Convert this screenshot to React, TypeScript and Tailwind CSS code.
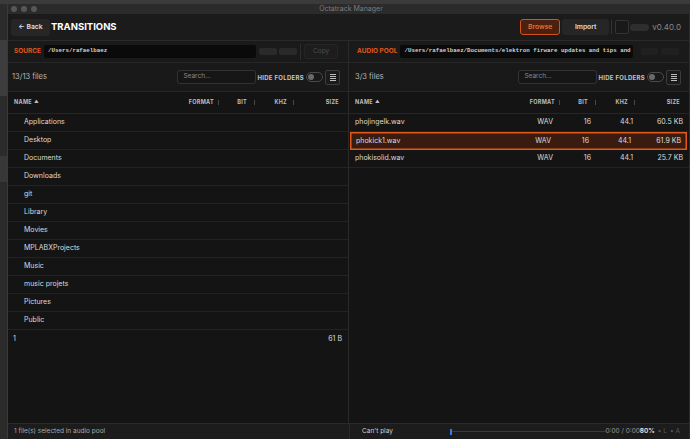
const leftFiles = [
  'Applications',
  'Desktop',
  'Documents',
  'Downloads',
  'git',
  'Library',
  'Movies',
  'MPLABXProjects',
  'Music',
  'music projets',
  'Pictures',
  'Public',
];

const poolFiles = [
  { name: 'phojingelk.wav', format: 'WAV', bit: '16', khz: '44.1', size: '60.5 KB' },
  { name: 'phokick1.wav', format: 'WAV', bit: '16', khz: '44.1', size: '61.9 KB', selected: true },
  { name: 'phokisolid.wav', format: 'WAV', bit: '16', khz: '44.1', size: '25.7 KB' },
];

const cols = 'grid grid-cols-[1fr_62px_36px_40px_48px] pl-[6px] pr-[5px]';

function MenuButton() {
  return (
    <div className="ml-[2px] flex h-[15px] w-[15px] flex-col items-center justify-center gap-[1px] rounded-[2px] border border-[#3c3c3c] bg-[#1b1b1b]">
      <span className="h-px w-[6px] bg-[#bbb]" />
      <span className="h-px w-[6px] bg-[#bbb]" />
      <span className="h-px w-[6px] bg-[#bbb]" />
      <span className="h-px w-[6px] bg-[#bbb]" />
    </div>
  );
}

function Toolbar({ count, indent }: { count: string; indent: string }) {
  return (
    <div className={`flex h-[29px] shrink-0 items-center border-b border-[#262626] bg-[#191919] pr-[8px] ${indent}`}>
      <span className="text-[7.5px] text-[#b3b3b3]">{count}</span>
      <div className="ml-auto flex h-[14px] w-[79px] items-center rounded-[3px] border border-[#333] bg-[#161616] pl-[5px] text-[6.5px] text-[#8a8a8a]">
        Search...
      </div>
      <span className="ml-[1px] text-[6px] font-bold tracking-[0.3px] text-[#c4c4c4]">HIDE FOLDERS</span>
      <div className="ml-[2px] flex h-[10px] w-[17px] items-center rounded-full border border-[#4a4a4a] pl-[1px]">
        <span className="h-[6px] w-[6px] rounded-full bg-[#6a6a6a]" />
      </div>
      <MenuButton />
    </div>
  );
}

function ColumnHeader() {
  return (
    <div className={`${cols} h-[22px] shrink-0 items-center border-b border-[#262626] text-[5.5px] font-bold tracking-[0.3px] text-[#bdbdbd]`}>
      <div className="flex items-center gap-[2px]">
        NAME <span className="text-[4.5px]">▲</span>
      </div>
      <div className="flex items-center justify-end gap-[4px]">
        FORMAT<span className="h-[5px] w-px bg-[#4a4a4a]" />
      </div>
      <div className="flex items-center justify-end gap-[7px]">
        BIT<span className="h-[5px] w-px bg-[#4a4a4a]" />
      </div>
      <div className="flex items-center justify-end gap-[6px] pr-[1px]">
        KHZ<span className="h-[5px] w-px bg-[#4a4a4a]" />
      </div>
      <div className="pr-[4px] text-right">SIZE</div>
    </div>
  );
}

function SourcePanel() {
  return (
    <div className="flex w-[341px] flex-col">
      <div className="flex h-[22px] shrink-0 items-center border-b border-[#262626] bg-[#1a1a1a] pl-[6px]">
        <span className="text-[6.5px] font-bold text-[#e0581e]">SOURCE</span>
        <div className="ml-[3px] flex h-[13px] w-[212px] items-center rounded-[2px] bg-[#0a0a0a] pl-[4px] font-['Liberation_Mono',monospace] text-[5.8px] font-bold text-[#d0d0d0]">
          /Users/rafaelbaez
        </div>
        <span className="ml-[3px] h-[7px] w-[18px] rounded-[2px] bg-[#2a2a2a]" />
        <span className="ml-[2px] h-[7px] w-[18px] rounded-[2px] bg-[#2a2a2a]" />
        <span className="ml-[3px] h-[16px] w-px bg-[#2c2c2c]" />
        <div className="ml-[3px] flex h-[15px] w-[34px] items-center justify-center rounded-[2px] border border-[#242424] bg-[#1d1d1d] text-[6.5px] text-[#4d4d4d]">
          Copy
        </div>
      </div>
      <Toolbar count="13/13 files" indent="pl-[4px]" />
      <ColumnHeader />
      <div className="flex flex-col text-[7px] text-[#dcdcdc]">
        {leftFiles.map((f) => (
          <div key={f} className="flex h-[18px] items-center border-b border-[#232323] pl-[16px]">
            {f}
          </div>
        ))}
        <div className="flex h-[18px] items-center justify-between pl-[5px] pr-[6px]">
          <span>1</span>
          <span>61 B</span>
        </div>
      </div>
    </div>
  );
}

function PoolPanel() {
  return (
    <div className="flex w-[341px] flex-col">
      <div className="flex h-[22px] shrink-0 items-center border-b border-[#262626] bg-[#1a1a1a] pl-[8px]">
        <span className="text-[6.5px] font-bold text-[#e0581e]">AUDIO POOL</span>
        <div className="ml-[3px] flex h-[13px] w-[233px] items-center overflow-hidden whitespace-nowrap rounded-[2px] bg-[#0a0a0a] pl-[4px] font-['Liberation_Mono',monospace] text-[5.8px] font-bold text-[#d0d0d0]">
          /Users/rafaelbaez/Documents/elektron firware updates and tips and
        </div>
        <span className="ml-[8px] h-[7px] w-[17px] rounded-[2px] bg-[#202020]" />
        <span className="ml-[3px] h-[7px] w-[18px] rounded-[2px] bg-[#202020]" />
      </div>
      <Toolbar count="3/3 files" indent="pl-[6px]" />
      <ColumnHeader />
      <div className="flex flex-col text-[7px] text-[#dcdcdc]">
        {poolFiles.map((f) => (
          <div
            key={f.name}
            className={`${cols} h-[18px] items-center ${
              f.selected
                ? 'ml-[1px] mr-[2px] bg-[#3a1b10] pl-[5px] pr-[3px] ring-[1.5px] ring-inset ring-[#e2581d]'
                : 'border-b border-[#232323]'
            }`}
          >
            <span>{f.name}</span>
            <span className="pr-[7px] text-right">{f.format}</span>
            <span className="pr-[5px] text-right">{f.bit}</span>
            <span className="pr-[3px] text-right">{f.khz}</span>
            <span className="pr-[1px] text-right">{f.size}</span>
          </div>
        ))}
      </div>
    </div>
  );
}

export default function App() {
  return (
    <div className="flex h-[439px] w-[690px] flex-col overflow-hidden bg-[#2c2c2c] font-['Inter','Liberation_Sans',sans-serif]">
      <div className="h-[4px] shrink-0 bg-[#3b3b3b]" />
      <div className="flex min-h-0 flex-1">
        <div className="flex w-[7px] shrink-0 flex-col bg-[#2b2b2b]">
          <div className="mt-[36px] h-[56px] bg-[#3d3d3d]" />
          <div className="mt-[60px] h-[26px] bg-[#383838]" />
        </div>
        <div className="flex w-[682px] flex-col border-l border-[#3a3a3a] bg-[#141414]">
          {/* title bar */}
          <div className="relative flex h-[10px] shrink-0 items-center bg-[#2b2b2b] pl-[3px]">
            <div className="flex gap-[4px]">
              <span className="h-[6px] w-[6px] rounded-full bg-[#575757]" />
              <span className="h-[6px] w-[6px] rounded-full bg-[#575757]" />
              <span className="h-[6px] w-[6px] rounded-full bg-[#575757]" />
            </div>
            <span className="flex-1 pr-[24px] text-center text-[7px] text-[#7c7c7c]">Octatrack Manager</span>
          </div>

          {/* header */}
          <div className="flex h-[27px] shrink-0 items-center border-b border-[#2a2a2a] bg-[#1b1b1b] pl-[3px] pr-[8px]">
            <div className="flex h-[17px] w-[39px] items-center justify-center rounded-[3px] bg-[#262626] text-[6.8px] font-semibold text-[#dedede]">
              ← Back
            </div>
            <span className="ml-[1px] text-[9.5px] font-bold text-white">TRANSITIONS</span>
            <div className="ml-auto flex h-[16px] w-[40px] items-center justify-center rounded-[3px] border border-[#d4531c] bg-[#4a2010] text-[6.8px] font-medium text-[#f07a3e]">
              Browse
            </div>
            <div className="ml-[2px] flex h-[16px] w-[47px] items-center justify-center rounded-[3px] bg-[#262626] text-[6.8px] font-semibold text-[#dedede]">
              Import
            </div>
            <span className="ml-[2px] h-[14px] w-px bg-[#333]" />
            <span className="ml-[3px] h-[14px] w-[14px] rounded-[2px] border border-[#333] bg-[#191919]" />
            <span className="ml-[1px] h-[7px] w-[19px] rounded-full bg-[#2e2e2e]" />
            <span className="ml-[3px] text-[8px] text-[#8a8a8a]">v0.40.0</span>
          </div>

          {/* panels */}
          <div className="flex min-h-0 flex-1">
            <SourcePanel />
            <div className="w-px bg-[#2a2a2a]" />
            <PoolPanel />
          </div>

          {/* status bar */}
          <div className="flex h-[16px] shrink-0 items-center border-t border-[#2a2a2a] bg-[#1c1c1c] text-[6.5px]">
            <div className="w-[341px] pl-[6px] text-[#a8a8a8]">1 file(s) selected in audio pool</div>
            <div className="h-full w-px bg-[#2a2a2a]" />
            <div className="flex flex-1 items-center pl-[12px] pr-[9px] text-[#cfcfcf]">
              <span className="w-[88px]">Can't play</span>
              <span className="h-[6px] w-[2px] bg-[#2f80ed]" />
              <span className="h-px flex-1 bg-[#3a3a3a]" />
              <span className="text-[#9a9a9a]">0:00 / 0:00</span>
              <span className="font-semibold text-[#e8e8e8]">80%</span>
              <span className="ml-[3px] text-[#5a5a5a]">• L</span>
              <span className="ml-[3px] text-[#5a5a5a]">• A</span>
            </div>
          </div>
        </div>
      </div>
    </div>
  );
}
